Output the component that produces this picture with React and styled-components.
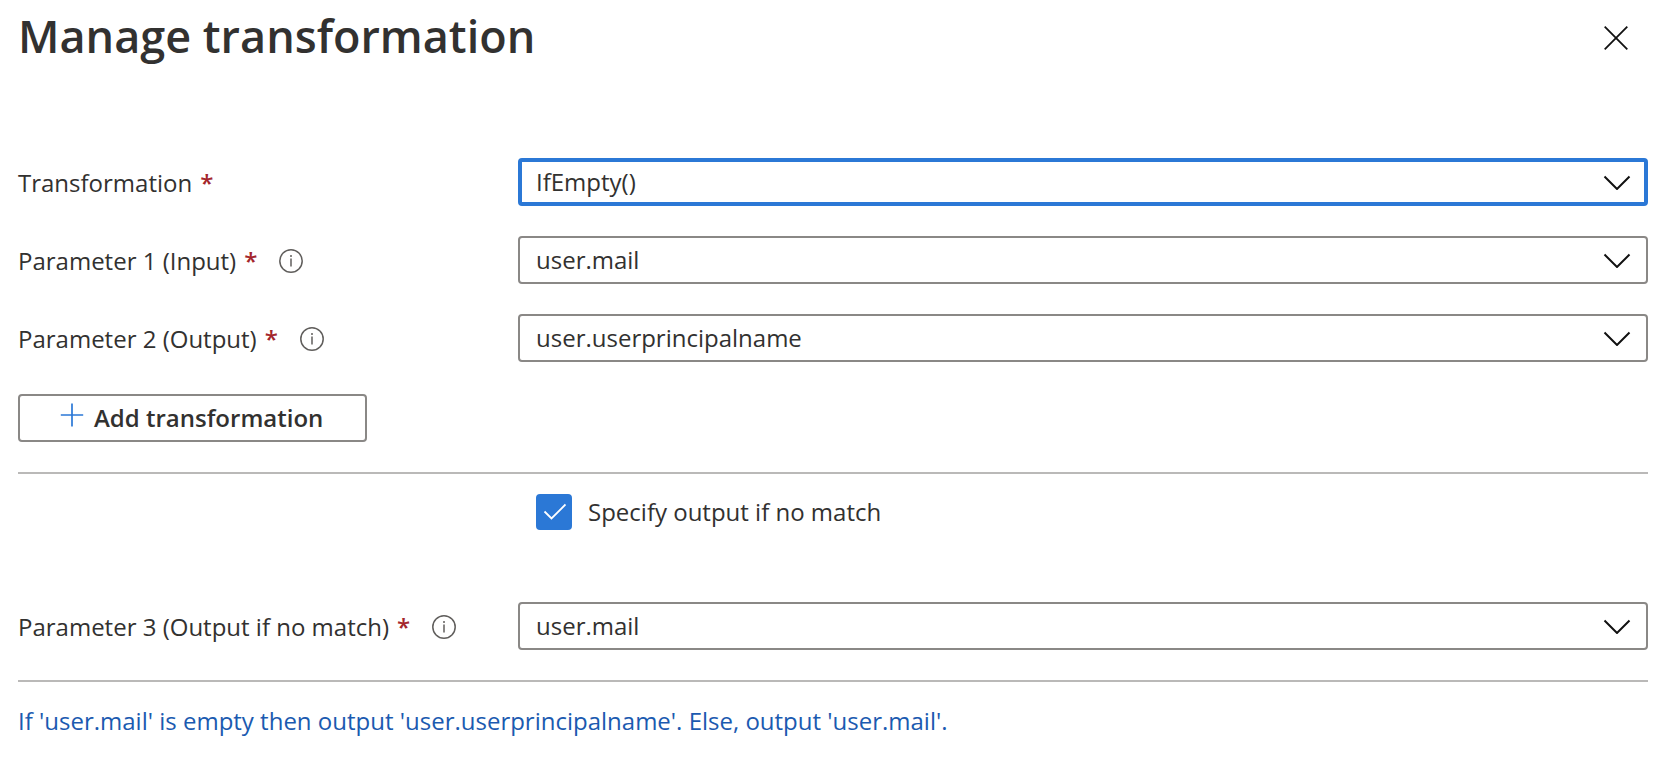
import React, { useState } from "react";
import styled, { createGlobalStyle } from "styled-components";

const GlobalStyle = createGlobalStyle`
  *, *::before, *::after { box-sizing: border-box; }
  body {
    margin: 0;
    background: #ffffff;
    color: #323130;
    font-family: "Segoe UI", "Open Sans", "Noto Sans", sans-serif;
    font-size: 24px;
    line-height: 32px;
  }
`;

const Panel = styled.main`
  padding: 8px 20px 40px 18px;
`;

const Header = styled.header`
  display: flex;
  align-items: center;
  justify-content: space-between;
  height: 60px;
  margin-bottom: 90px;
`;

const Title = styled.h1`
  margin: 0;
  padding-bottom: 4px;
  font-size: 45px;
  line-height: 56px;
  font-weight: 600;
`;

const CloseButton = styled.button`
  display: flex;
  padding: 8px;
  margin-right: 12px;
  border: 0;
  background: none;
  color: #111111;
  cursor: pointer;
`;

const Section = styled.section`
  display: flex;
  flex-direction: column;
  align-items: flex-start;
  gap: 30px;
  padding-bottom: 30px;
`;

const Row = styled.div`
  display: grid;
  grid-template-columns: 500px minmax(0, 1fr);
  align-items: center;
  width: 100%;
`;

const LabelCell = styled.div`
  display: flex;
  align-items: center;
  padding-top: 2px;
`;

const Required = styled.span`
  margin-left: 8px;
  color: #a4262c;
  font-weight: 600;
`;

const InfoButton = styled.button`
  display: flex;
  margin-left: 22px;
  padding: 0;
  border: 0;
  background: none;
  color: #605e5c;
`;

const SelectBox = styled.div`
  display: grid;
  align-items: center;

  > * { grid-area: 1 / 1; }
  > svg {
    justify-self: end;
    margin-right: 17px;
    pointer-events: none;
    color: #111111;
  }
`;

const Select = styled.select`
  appearance: none;
  width: 100%;
  height: 48px;
  padding: 0 60px 0 ${(p) => (p.$active ? 14 : 16)}px;
  border: ${(p) => (p.$active ? "4px solid #2b78d6" : "2px solid #8a8886")};
  border-radius: 4px;
  outline: none;
  background: #ffffff;
  color: inherit;
  font: inherit;
`;

const AddButton = styled.button`
  display: flex;
  align-items: center;
  gap: 10px;
  height: 48px;
  margin-top: 2px;
  padding: 0 42px 0 40px;
  border: 2px solid #8a8886;
  border-radius: 4px;
  background: #ffffff;
  color: inherit;
  font: inherit;
  font-weight: 600;

  svg { color: #2b78d6; margin-bottom: 6px; }
`;

const Divider = styled.hr`
  width: 100%;
  height: 2px;
  margin: 0;
  border: 0;
  background: #bab9b8;
`;

const CheckRow = styled.div`
  display: flex;
  padding: 20px 0 72px 518px;
`;

const CheckLabel = styled.label`
  display: flex;
  align-items: center;
  gap: 16px;
  height: 36px;
`;

const CheckBox = styled.span`
  display: grid;
  place-items: center;

  > * { grid-area: 1 / 1; }
  > svg { pointer-events: none; color: #ffffff; }
`;

const CheckInput = styled.input`
  appearance: none;
  width: 36px;
  height: 36px;
  margin: 0;
  border: 2px solid #8a8886;
  border-radius: 4px;
  background: #ffffff;

  &:checked { border-color: #2b78d6; background: #2b78d6; }
`;

const Summary = styled.p`
  margin: 23px 0 0;
  color: #1b5ab0;
`;

const Chevron = () => (
  <svg width="28" height="16" viewBox="0 0 28 16" fill="none" stroke="currentColor" strokeWidth="2" aria-hidden="true">
    <path d="M1.5 2.5 14 15 26.5 2.5" />
  </svg>
);

const CloseIcon = () => (
  <svg width="24" height="24" viewBox="0 0 24 24" fill="none" stroke="currentColor" strokeWidth="1.8" aria-hidden="true">
    <path d="M.7.7 23.3 23.3M23.3.7.7 23.3" />
  </svg>
);

const InfoIcon = () => (
  <svg width="24" height="24" viewBox="0 0 24 24" fill="none" stroke="currentColor" strokeWidth="1.5" aria-hidden="true">
    <circle cx="12" cy="12" r="11.2" />
    <path d="M12 9.5V17.5" />
    <circle cx="12" cy="7" r="1" fill="currentColor" stroke="none" />
  </svg>
);

const PlusIcon = () => (
  <svg width="24" height="24" viewBox="0 0 24 24" fill="none" stroke="currentColor" strokeWidth="1.7" aria-hidden="true">
    <path d="M12 .5V23.5M.8 12H23.2" />
  </svg>
);

const CheckIcon = () => (
  <svg width="24" height="18" viewBox="0 0 24 18" fill="none" stroke="currentColor" strokeWidth="1.8" aria-hidden="true">
    <path d="M2.5 8.5 9.5 15.5 23.5 1.5" />
  </svg>
);

function Field({ id, label, info, active, value, onChange, options }) {
  return (
    <Row>
      <LabelCell>
        <label htmlFor={id}>{label}</label>
        <Required aria-hidden="true">*</Required>
        {info && (
          <InfoButton type="button" aria-label={`About ${label}`}>
            <InfoIcon />
          </InfoButton>
        )}
      </LabelCell>
      <SelectBox>
        <Select id={id} required $active={active} value={value} onChange={(e) => onChange(e.target.value)}>
          {options.map((o) => (
            <option key={o}>{o}</option>
          ))}
        </Select>
        <Chevron />
      </SelectBox>
    </Row>
  );
}

const ATTRIBUTES = ["user.mail", "user.userprincipalname"];

export default function App() {
  const [transformation, setTransformation] = useState("IfEmpty()");
  const [input, setInput] = useState("user.mail");
  const [output, setOutput] = useState("user.userprincipalname");
  const [fallback, setFallback] = useState("user.mail");
  const [useFallback, setUseFallback] = useState(true);

  return (
    <>
      <GlobalStyle />
      <Panel>
        <Header>
          <Title>Manage transformation</Title>
          <CloseButton type="button" aria-label="Close">
            <CloseIcon />
          </CloseButton>
        </Header>
        <Section>
          <Field id="transformation" label="Transformation" active value={transformation} onChange={setTransformation} options={["IfEmpty()"]} />
          <Field id="parameter-1" label="Parameter 1 (Input)" info value={input} onChange={setInput} options={ATTRIBUTES} />
          <Field id="parameter-2" label="Parameter 2 (Output)" info value={output} onChange={setOutput} options={ATTRIBUTES} />
          <AddButton type="button">
            <PlusIcon />
            Add transformation
          </AddButton>
        </Section>
        <Divider />
        <CheckRow>
          <CheckLabel>
            <CheckBox>
              <CheckInput type="checkbox" checked={useFallback} onChange={(e) => setUseFallback(e.target.checked)} />
              {useFallback && <CheckIcon />}
            </CheckBox>
            Specify output if no match
          </CheckLabel>
        </CheckRow>
        <Section>
          <Field id="parameter-3" label="Parameter 3 (Output if no match)" info value={fallback} onChange={setFallback} options={ATTRIBUTES} />
        </Section>
        <Divider />
        <Summary>
          If '{input}' is empty then output '{output}'. Else, output '{fallback}'.
        </Summary>
      </Panel>
    </>
  );
}
